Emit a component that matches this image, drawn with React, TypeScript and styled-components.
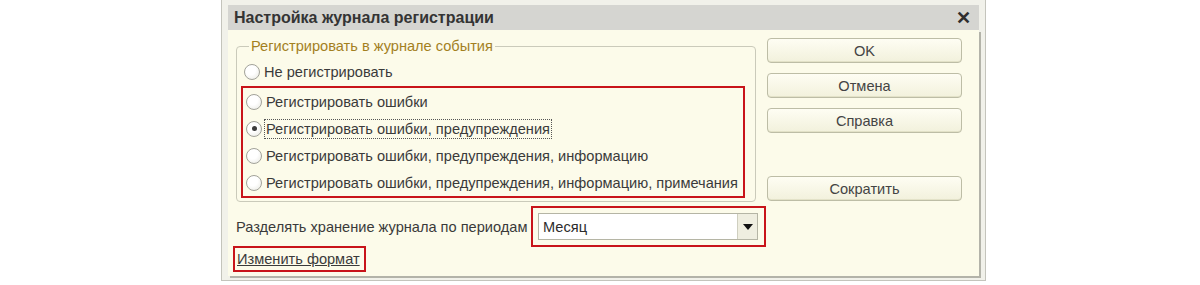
import * as React from 'react'
import { useState } from 'react'
import styled, { createGlobalStyle } from 'styled-components'

const GlobalStyle = createGlobalStyle`
  html, body {
    margin: 0;
    padding: 0;
    background: #ffffff;
  }
  body {
    font-family: "Liberation Sans", Arial, sans-serif;
  }
`

const options = [
  'Не регистрировать',
  'Регистрировать ошибки',
  'Регистрировать ошибки, предупреждения',
  'Регистрировать ошибки, предупреждения, информацию',
  'Регистрировать ошибки, предупреждения, информацию, примечания'
]

const App = () => {
  const [selected, setSelected] = useState(2)

  const renderOption = (index: number) => (
    <Option key={index} onClick={() => setSelected(index)}>
      <Radio checked={selected === index} />
      <OptionLabel focused={selected === index}>{options[index]}</OptionLabel>
    </Option>
  )

  return (
    <>
      <GlobalStyle />
      <Dialog>
        <TitleBar>
          <Title>Настройка журнала регистрации</Title>
          <Close>✕</Close>
        </TitleBar>
        <Content>
          <TopArea>
            <Group>
              <Legend>Регистрировать в журнале события</Legend>
              {renderOption(0)}
              <Highlight>
                {[1, 2, 3, 4].map(renderOption)}
              </Highlight>
            </Group>
            <Buttons>
              <Button>OK</Button>
              <Button>Отмена</Button>
              <Button>Справка</Button>
              <Spacer />
              <Button>Сократить</Button>
            </Buttons>
          </TopArea>
          <PeriodRow>
            <PeriodLabel>Разделять хранение журнала по периодам</PeriodLabel>
            <ComboHighlight>
              <Combo>
                <ComboValue>Месяц</ComboValue>
                <ComboButton>
                  <svg width="10" height="6" viewBox="0 0 10 6">
                    <path d="M0 0 H10 L5 6 Z" fill="#111" />
                  </svg>
                </ComboButton>
              </Combo>
            </ComboHighlight>
          </PeriodRow>
          <LinkHighlight>
            <Link>Изменить формат</Link>
          </LinkHighlight>
        </Content>
      </Dialog>
    </>
  )
}

const Dialog = styled.div`
  margin-left: 221px;
  width: 751px;
  padding: 5px 6px 4px 6px;
  background: #f1f1ea;
  border-left: 1px solid #c4c4bc;
  border-right: 1px solid #c4c4bc;
  border-bottom: 1px solid #c4c4bc;
`
const TitleBar = styled.div`
  height: 25px;
  display: flex;
  align-items: center;
  justify-content: space-between;
  padding: 0 8px 0 6px;
  background: #d5d5d1;
`
const Title = styled.div`
  font-size: 16px;
  font-weight: bold;
  color: #343434;
`
const Close = styled.div`
  font-size: 18px;
  font-weight: bold;
  color: #2e2e2e;
`
const Content = styled.div`
  background: #fcfbea;
  padding: 8px 10px 4px 8px;
  box-shadow: 2px 2px 0 #b3b3a9;
  display: flex;
  flex-direction: column;
`
const TopArea = styled.div`
  display: flex;
  gap: 11px;
`
const Group = styled.fieldset`
  width: 520px;
  box-sizing: border-box;
  margin: 0;
  padding: 4px 10px 3px 4px;
  border: 1px solid #cacaba;
  border-radius: 4px;
`
const Legend = styled.legend`
  font-size: 14.6px;
  line-height: 16px;
  color: #a3801f;
  padding: 0 2px;
  margin-left: 8px;
`
const Highlight = styled.div`
  border: 2px solid #c8141a;
  margin-top: 1px;
`
const Option = styled.div`
  height: 27px;
  display: flex;
  align-items: center;
  gap: 2px;
  padding-left: 3px;
  cursor: default;
`
const Radio = styled.span<{ checked: boolean }>`
  width: 14px;
  height: 14px;
  border-radius: 50%;
  border: 1px solid #a2a29a;
  background: radial-gradient(circle at 40% 35%, #ffffff 40%, #e6e6de 100%);
  display: flex;
  align-items: center;
  justify-content: center;
  &::after {
    content: '';
    width: 5px;
    height: 5px;
    border-radius: 50%;
    background: #3c3c3c;
    display: ${p => (p.checked ? 'block' : 'none')};
  }
`
const OptionLabel = styled.span<{ focused: boolean }>`
  font-size: 14.6px;
  color: #3a3a3a;
  padding: 1px 1px;
  border: 1px dotted ${p => (p.focused ? '#555' : 'transparent')};
`
const Buttons = styled.div`
  width: 195px;
  display: flex;
  flex-direction: column;
  gap: 10px;
`
const Spacer = styled.div`
  height: 23px;
`
const Button = styled.div`
  height: 25px;
  box-sizing: border-box;
  display: flex;
  align-items: center;
  justify-content: center;
  font-size: 14.6px;
  color: #444;
  border: 1px solid #bdbda6;
  border-radius: 4px;
  background: linear-gradient(#fefdf3, #f2f1dc);
  box-shadow: inset 0 -1px 0 #e3e2c8;
`
const PeriodRow = styled.div`
  display: flex;
  align-items: center;
  margin-top: 4px;
`
const PeriodLabel = styled.div`
  font-size: 14.6px;
  color: #3a3a3a;
  width: 295px;
`
const ComboHighlight = styled.div`
  border: 2px solid #c8141a;
  padding: 5px 6px 5px 5px;
`
const Combo = styled.div`
  width: 220px;
  height: 27px;
  box-sizing: border-box;
  display: flex;
  border: 1px solid #b5b5a5;
  background: #ffffff;
`
const ComboValue = styled.div`
  flex: 1;
  display: flex;
  align-items: center;
  padding-left: 4px;
  font-size: 14.6px;
  color: #2c2c2c;
`
const ComboButton = styled.div`
  width: 19px;
  display: flex;
  align-items: center;
  justify-content: center;
  background: #efeee0;
  border-left: 1px solid #cfcfc0;
`
const LinkHighlight = styled.div`
  align-self: flex-start;
  box-sizing: border-box;
  margin: -1px 0 0 -3px;
  border: 2px solid #c8141a;
  padding: 0 4px 0 2px;
  height: 26px;
  display: flex;
  align-items: center;
`
const Link = styled.span`
  font-size: 14.6px;
  color: #3a3a3a;
  text-decoration: underline;
`

export default App
